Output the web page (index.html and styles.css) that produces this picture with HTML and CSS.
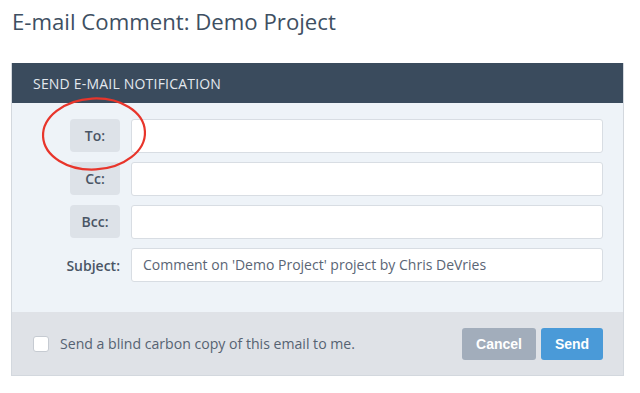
FILE: index.html
```html
<!DOCTYPE html>
<html>
<head>
<meta charset="utf-8">
<link rel="stylesheet" href="styles.css">
</head>
<body>
<div class="page">
  <h1 class="title">E-mail Comment: Demo Project</h1>
  <div class="panel">
    <div class="panel-head">SEND E-MAIL NOTIFICATION</div>
    <div class="panel-body">
      <div class="row">
        <div class="label-cell"><span class="tag">To:</span></div>
        <div class="field"></div>
      </div>
      <div class="row">
        <div class="label-cell"><span class="tag">Cc:</span></div>
        <div class="field"></div>
      </div>
      <div class="row">
        <div class="label-cell"><span class="tag">Bcc:</span></div>
        <div class="field"></div>
      </div>
      <div class="row">
        <div class="label-cell"><span class="plain">Subject:</span></div>
        <div class="field">Comment on 'Demo Project' project by Chris DeVries</div>
      </div>
    </div>
    <div class="panel-foot">
      <label class="check"><span class="box"></span><span>Send a blind carbon copy of this email to me.</span></label>
      <div class="actions">
        <span class="btn btn-cancel">Cancel</span>
        <span class="btn btn-send">Send</span>
      </div>
    </div>
  </div>
  <svg class="circle" width="110" height="80" viewBox="0 0 110 80">
    <ellipse cx="55" cy="39" rx="51" ry="35.5" fill="none" stroke="#e8352b" stroke-width="2.2" transform="rotate(-3 55 39)"/>
  </svg>
</div>
</body>
</html>
```
FILE: styles.css
```css
html, body {
  margin: 0;
  padding: 0;
  background: #ffffff;
}
body {
  font-family: "Open Sans", "Noto Sans", sans-serif;
  color: #4a5666;
}
.page {
  position: relative;
  padding: 0 16px 0 11px;
}
.title {
  margin: 0;
  padding: 7px 0 0 1px;
  height: 63px;
  box-sizing: border-box;
  font-size: 22.2px;
  font-weight: 400;
  line-height: 30px;
  color: #3e4f62;
}
.panel {
  border: 1px solid #d3d8de;
  border-top: none;
}
.panel-head {
  background: #3a4b5d;
  color: #e3e8ee;
  font-size: 14px;
  height: 40px;
  line-height: 41px;
  padding-left: 21px;
  letter-spacing: 0.2px;
}
.panel-body {
  background: #eef3f8;
  padding: 16px 20px 30px 20px;
  display: flex;
  flex-direction: column;
  gap: 9px;
}
.row {
  display: grid;
  grid-template-columns: 88px 1fr;
  column-gap: 11px;
  height: 34px;
}
.label-cell {
  display: flex;
  justify-content: flex-end;
  align-items: center;
}
.tag {
  width: 50px;
  height: 33px;
  box-sizing: border-box;
  background: #dde2e8;
  border-radius: 4px;
  display: flex;
  align-items: center;
  justify-content: center;
  font-size: 14px;
  font-weight: 600;
  color: #4a5565;
  align-self: flex-start;
}
.plain {
  font-size: 14px;
  font-weight: 600;
  color: #4a5565;
}
.field {
  background: #ffffff;
  border: 1px solid #d8dde3;
  border-radius: 3px;
  box-sizing: border-box;
  height: 34px;
  line-height: 32px;
  padding-left: 11px;
  font-size: 14px;
  color: #5a6575;
}
.panel-foot {
  background: #dfe2e7;
  height: 63px;
  box-sizing: border-box;
  padding: 16px 20px 15px 21px;
  display: flex;
  align-items: center;
  justify-content: space-between;
}
.check {
  display: flex;
  align-items: center;
  gap: 11px;
  font-size: 14.1px;
  color: #566272;
  margin-top: -1px;
}
.box {
  width: 16px;
  height: 16px;
  box-sizing: border-box;
  background: #ffffff;
  border: 1px solid #c6cbd2;
  border-radius: 3px;
}
.actions {
  display: flex;
  gap: 5px;
}
.btn {
  height: 32px;
  line-height: 32px;
  border-radius: 3px;
  color: #ffffff;
  font-family: "Liberation Sans", Arial, sans-serif;
  font-weight: 700;
  font-size: 14px;
  text-align: center;
}
.btn-cancel {
  width: 74px;
  background: #a2adbb;
}
.btn-send {
  width: 62px;
  background: #4a9ad8;
}
.circle {
  position: absolute;
  left: 39px;
  top: 95px;
}
```
